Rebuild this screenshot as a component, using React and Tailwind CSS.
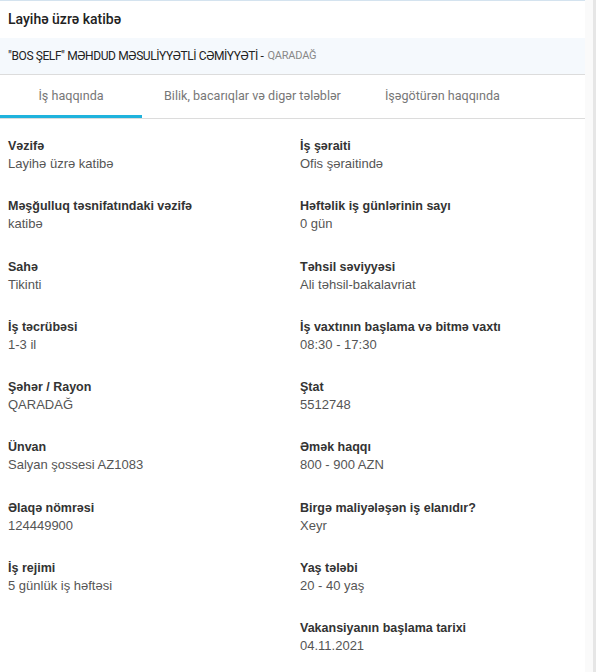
import React from 'react';

const fields = [
  ['Vəzifə', 'Layihə üzrə katibə', 'İş şəraiti', 'Ofis şəraitində'],
  ['Məşğulluq təsnifatındaki vəzifə', 'katibə', 'Həftəlik iş günlərinin sayı', '0 gün'],
  ['Sahə', 'Tikinti', 'Təhsil səviyyəsi', 'Ali təhsil-bakalavriat'],
  ['İş təcrübəsi', '1-3 il', 'İş vaxtının başlama və bitmə vaxtı', '08:30 - 17:30'],
  ['Şəhər / Rayon', 'QARADAĞ', 'Ştat', '5512748'],
  ['Ünvan', 'Salyan şossesi AZ1083', 'Əmək haqqı', '800 - 900 AZN'],
  ['Əlaqə nömrəsi', '124449900', 'Birgə maliyələşən iş elanıdır?', 'Xeyr'],
  ['İş rejimi', '5 günlük iş həftəsi', 'Yaş tələbi', '20 - 40 yaş'],
  [null, null, 'Vakansiyanın başlama tarixi', '04.11.2021'],
];

const tabs = ['İş haqqında', 'Bilik, bacarıqlar və digər tələblər', 'İşəgötürən haqqında'];

function Field({ label, value }) {
  if (!label) return <div />;
  return (
    <div className="pb-[24.3px]">
      <div className="text-[12.5px] leading-[18px] font-bold text-[#333]">{label}</div>
      <div className="text-[13px] leading-[18px] text-[#555]">{value}</div>
    </div>
  );
}

export default function App() {
  return (
    <div className="flex min-h-[672px] bg-[#fafafa]">
      <div className="w-[585px] bg-white border-t border-[#d4e3ef]">
        <div className="px-2 h-[37px] flex items-center text-[14px] font-medium text-[#222]" style={{ fontFamily: 'Roboto, sans-serif' }}>
          Layihə üzrə katibə
        </div>
        <div className="h-[37px] px-2 flex items-center bg-[#f5f9fd] border-b border-[#dcdcdc]" style={{ fontFamily: 'Roboto, sans-serif' }}>
          <span className="text-[12px] tracking-[-0.4px] text-[#222]">
            "BOS ŞELF" MƏHDUD MƏSULİYYƏTLİ CƏMİYYƏTİ -
          </span>
          <span className="ml-1 text-[11px] tracking-[-0.2px] text-[#888]">QARADAĞ</span>
        </div>
        <div className="flex h-[44px] border-b border-[#dcdcdc]" style={{ fontFamily: 'Roboto, sans-serif' }}>
          {tabs.map((t, i) => (
            <div
              key={t}
              className={`min-w-[142px] px-[22px] flex items-center justify-center text-[12.6px] text-[#777] ${i === 0 ? 'border-b-[3px] border-[#1fb3dd] pt-[3px]' : ''}`}
            >
              {t}
            </div>
          ))}
        </div>
        <div className="grid grid-cols-[292px_1fr] px-2 pt-[18px]" style={{ fontFamily: '"Liberation Sans", Arial, sans-serif' }}>
          {fields.map((r, i) => (
            <React.Fragment key={i}>
              <Field label={r[0]} value={r[1]} />
              <Field label={r[2]} value={r[3]} />
            </React.Fragment>
          ))}
        </div>
      </div>
      <div className="flex-1" />
      <div className="w-[3px] bg-[#e6e6e6]" />
    </div>
  );
}
